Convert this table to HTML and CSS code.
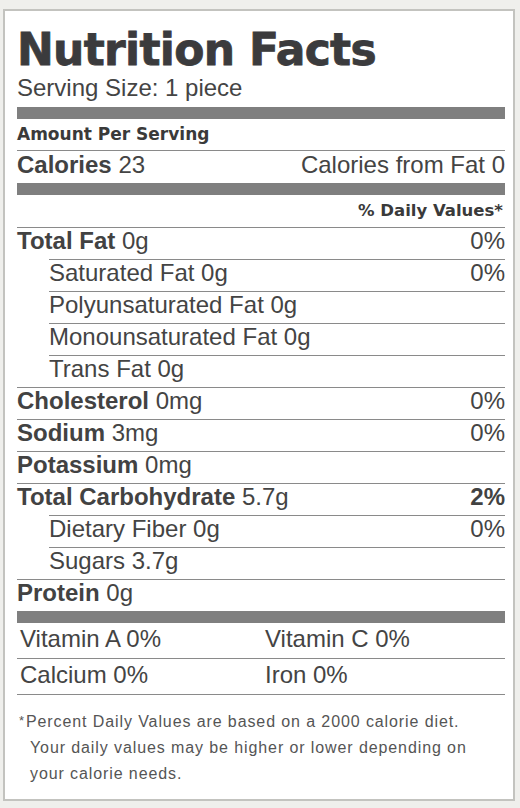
FILE: index.html
```html
<!DOCTYPE html>
<html>
<head>
<meta charset="utf-8">
<link rel="stylesheet" href="styles.css">
</head>
<body>
<div class="label">
  <h1 class="title">Nutrition Facts</h1>
  <div class="serving">Serving Size: 1 piece</div>
  <div class="bar"></div>
  <div class="amount">Amount Per Serving</div>
  <div class="calories">
    <span><b>Calories</b> 23</span>
    <span>Calories from Fat 0</span>
  </div>
  <div class="bar"></div>
  <div class="dv">% Daily Values*</div>
  <div class="row"><span><b>Total Fat</b> 0g</span><span>0%</span></div>
  <div class="row sub"><span>Saturated Fat 0g</span><span>0%</span></div>
  <div class="row sub"><span>Polyunsaturated Fat 0g</span><span></span></div>
  <div class="row sub"><span>Monounsaturated Fat 0g</span><span></span></div>
  <div class="row sub"><span>Trans Fat 0g</span><span></span></div>
  <div class="row"><span><b>Cholesterol</b> 0mg</span><span>0%</span></div>
  <div class="row"><span><b>Sodium</b> 3mg</span><span>0%</span></div>
  <div class="row"><span><b>Potassium</b> 0mg</span><span></span></div>
  <div class="row"><span><b>Total Carbohydrate</b> 5.7g</span><span><b>2%</b></span></div>
  <div class="row sub"><span>Dietary Fiber 0g</span><span>0%</span></div>
  <div class="row sub"><span>Sugars 3.7g</span><span></span></div>
  <div class="row"><span><b>Protein</b> 0g</span><span></span></div>
  <div class="bar"></div>
  <div class="vitamins">
    <div class="vit">Vitamin A 0%</div>
    <div class="vit">Vitamin C 0%</div>
    <div class="vit">Calcium 0%</div>
    <div class="vit">Iron 0%</div>
  </div>
  <p class="foot"><span class="star">*</span>Percent Daily Values are based on a 2000 calorie diet.<br>Your daily values may be higher or lower depending on<br>your calorie needs.</p>
</div>
</body>
</html>
```
FILE: styles.css
```css
html, body {
  margin: 0;
  padding: 0;
  background: #efefec;
}
body {
  font-family: "Liberation Sans", Arial, sans-serif;
  color: #404040;
}
.label {
  box-sizing: border-box;
  margin: 9px 5px 0 3px;
  height: 792px;
  border: 2px solid #c3c3bf;
  background: #ffffff;
  padding: 0 8px 0 12px;
}
.title {
  margin: 14px 0 0 0;
  font-family: "DejaVu Sans", Verdana, sans-serif;
  font-weight: 700;
  font-size: 44px;
  letter-spacing: -0.7px;
  line-height: 50px;
  color: #3b3b3d;
  -webkit-text-stroke: 0.8px #3b3b3d;
}
.serving {
  font-size: 24px;
  line-height: 26px;
  color: #444;
}
.bar {
  height: 12px;
  margin-top: 6px;
  background: #7f7f7f;
}
.calories + .bar {
  margin-top: 0;
}
.row + .bar {
  margin-top: 0;
}
.amount {
  font-family: "DejaVu Sans", Verdana, sans-serif;
  font-weight: 700;
  font-size: 17px;
  line-height: 31px;
  color: #3a3a3a;
  border-bottom: 1px solid #8a8a8a;
}
.calories {
  display: flex;
  justify-content: space-between;
  font-size: 24px;
  line-height: 28px;
  padding-bottom: 4px;
  color: #444;
}
b {
  font-weight: 700;
  color: #424242;
}
.dv {
  text-align: right;
  font-family: "DejaVu Sans", Verdana, sans-serif;
  font-weight: 700;
  font-size: 16.5px;
  line-height: 32px;
  padding-right: 2px;
  color: #3a3a3a;
}
.row {
  display: flex;
  justify-content: space-between;
  border-top: 1px solid #8a8a8a;
  font-size: 24px;
  line-height: 26px;
  padding-bottom: 5px;
  color: #444;
}
.row.sub {
  margin-left: 32px;
}
.vitamins {
  display: grid;
  grid-template-columns: 245px 1fr;
}
.vit {
  font-size: 24px;
  line-height: 26px;
  padding: 3px 0 6px 3px;
  border-bottom: 1px solid #8a8a8a;
  color: #444;
}
.foot {
  margin: 13px 0 0 2px;
  padding-left: 11px;
  text-indent: -11px;
  font-size: 16px;
  letter-spacing: 0.9px;
  line-height: 26px;
  color: #555;
}
.star {
  display: inline-block;
  text-indent: 0;
  width: 7px;
  letter-spacing: 0;
  font-size: 13px;
  vertical-align: 2px;
}
```
